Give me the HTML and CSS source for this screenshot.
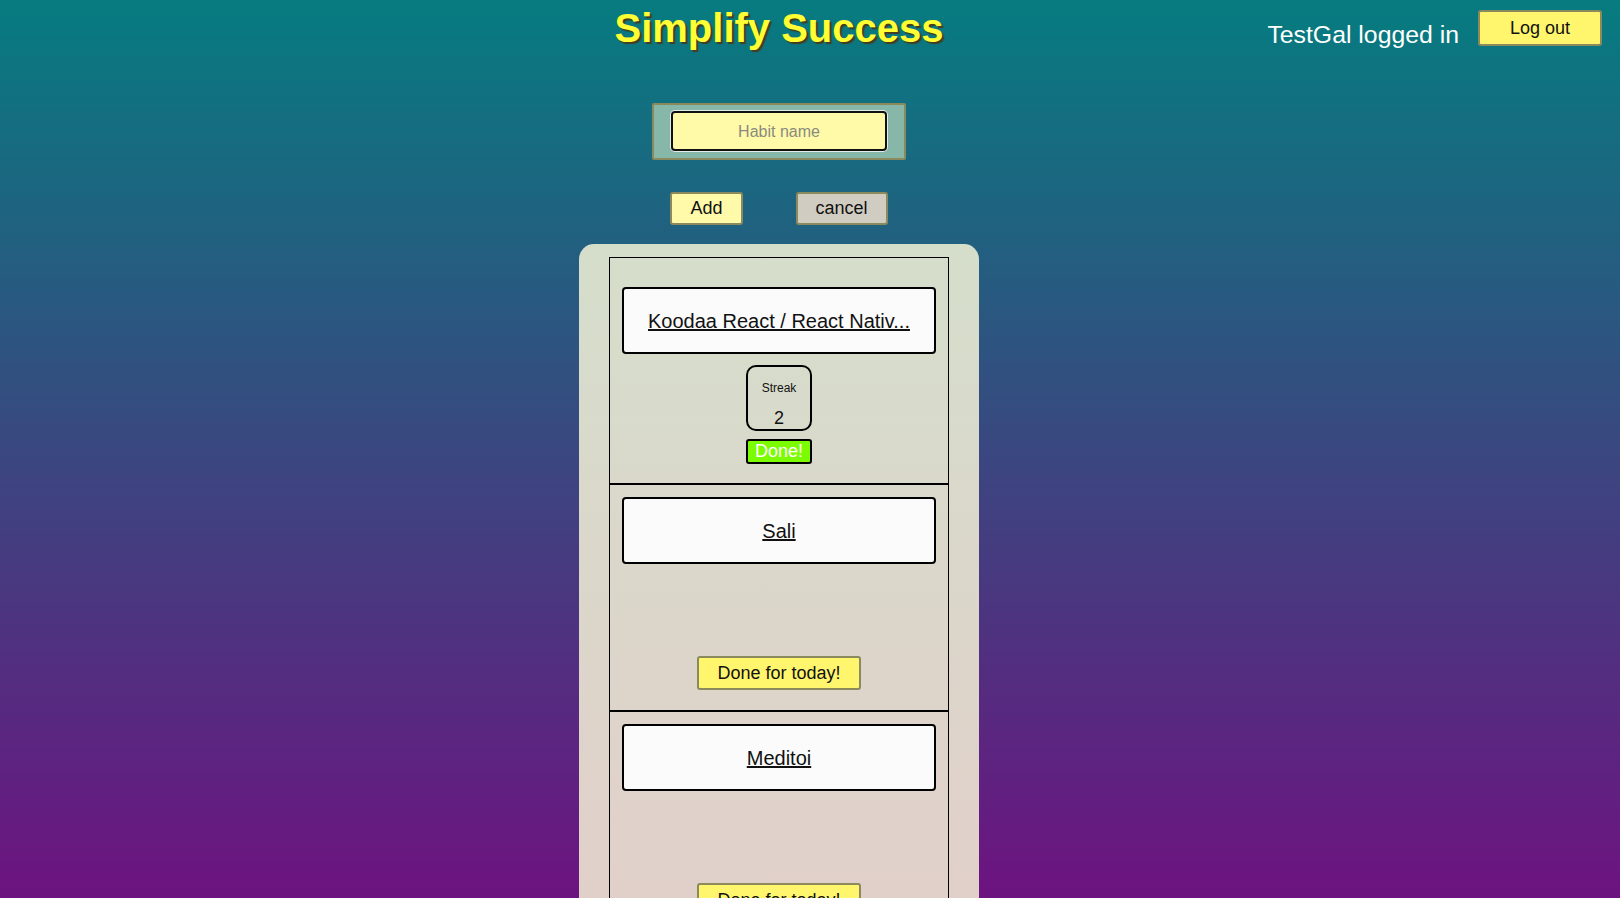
FILE: index.html
```html
<!DOCTYPE html>
<html lang="en">
<head>
<meta charset="utf-8">
<title>Simplify Success</title>
<link rel="stylesheet" href="styles.css">
</head>
<body>
  <header class="top">
    <h1 class="brand">Simplify Success</h1>
    <div class="user">
      <span class="user-name">TestGal logged in</span>
      <button class="btn btn-yellow btn-logout" type="button">Log out</button>
    </div>
  </header>
  <main class="main">
    <form class="new-habit">
      <input class="habit-input" type="text" placeholder="Habit name">
    </form>
    <div class="form-actions">
      <button class="btn btn-add" type="button">Add</button>
      <button class="btn btn-cancel" type="button">cancel</button>
    </div>
    <section class="card">
      <ul class="habit-list">
        <li class="habit habit-first">
          <div class="habit-title"><a href="#">Koodaa React / React Nativ...</a></div>
          <div class="streak">
            <span class="streak-label">Streak</span>
            <span class="streak-value">2</span>
          </div>
          <button class="btn-done" type="button">Done!</button>
        </li>
        <li class="habit">
          <div class="habit-title"><a href="#">Sali</a></div>
          <button class="btn btn-yellow btn-today" type="button">Done for today!</button>
        </li>
        <li class="habit">
          <div class="habit-title"><a href="#">Meditoi</a></div>
          <button class="btn btn-yellow btn-today" type="button">Done for today!</button>
        </li>
      </ul>
    </section>
  </main>
</body>
</html>
```

FILE: styles.css
```css
html {
  height: 100%;
  overflow: hidden;
}

body {
  margin: 0;
  min-height: 100%;
  font-family: "Liberation Sans", Arial, sans-serif;
  color: #111;
  background: linear-gradient(to bottom, #067c80 0px, #6d1380 898px);
}

.top {
  display: grid;
  grid-template-columns: 1fr;
}

.brand {
  grid-area: 1 / 1;
  justify-self: center;
  margin: 5px 62px 0 0;
  font-size: 40px;
  line-height: 46px;
  font-weight: bold;
  color: #ffff33;
  text-shadow: 2px 2px 1px rgba(90, 40, 0, 0.75);
}

.user {
  grid-area: 1 / 1;
  justify-self: end;
  align-self: start;
  display: flex;
  align-items: flex-start;
  gap: 19px;
  margin-right: 18px;
}

.user-name {
  margin-top: 21px;
  font-size: 24.8px;
  line-height: 28px;
  color: #fff;
}

.btn {
  font-family: "Liberation Sans", Arial, sans-serif;
  font-size: 18px;
  line-height: 21px;
  color: #111;
  border: 2px solid #8a8a5c;
  border-radius: 3px;
  padding: 0 18px;
  box-sizing: border-box;
  cursor: pointer;
}

.btn-yellow {
  background: #fff66e;
}

.btn-logout {
  margin-top: 10px;
  width: 124px;
  height: 36px;
  padding: 0;
}

.main {
  display: flex;
  flex-direction: column;
  align-items: center;
  padding-right: 62px;
}

.new-habit {
  margin: 52px 0 0;
  padding: 6px 17px 7px;
  background: #87b7a9;
  border: 2px solid #8a8a5c;
  border-radius: 2px;
}

.habit-input {
  display: block;
  width: 216px;
  height: 40px;
  box-sizing: border-box;
  border: 2px solid #111;
  border-radius: 4px;
  background: #fffaa8;
  box-shadow: 0 0 0 1px rgba(255, 255, 255, 0.75);
  font-family: "Liberation Sans", Arial, sans-serif;
  font-size: 16px;
  text-align: center;
  outline: none;
  padding-top: 2px;
}

.habit-input::placeholder {
  color: #8a8a80;
}

.form-actions {
  display: flex;
  gap: 53px;
  margin-top: 32px;
}

.form-actions .btn {
  height: 33px;
}

.btn-add {
  background: #fffaaa;
}

.btn-cancel {
  background: #d0ccc2;
}

.card {
  margin-top: 19px;
  width: 400px;
  box-sizing: border-box;
  padding: 13px 30px 0;
  border-radius: 15px 15px 0 0;
  background: linear-gradient(to bottom, #d5decb 0px, #e1d0ca 654px);
}

.habit-list {
  list-style: none;
  margin: 0;
  padding: 17px 12px 0;
  border: 1px solid #000;
  border-bottom: none;
}

.habit {
  display: flex;
  flex-direction: column;
  align-items: center;
  margin: 0 -12px;
  padding: 12px 12px 20px;
  border-bottom: 2px solid #000;
}

.habit-first {
  padding-bottom: 19px;
}

.habit-title {
  align-self: stretch;
  height: 67px;
  box-sizing: border-box;
  display: flex;
  align-items: center;
  justify-content: center;
  background: #fbfbfb;
  border: 2px solid #000;
  border-radius: 4px;
  padding-top: 1px;
}

.habit-title a {
  font-size: 20px;
  color: #111;
  text-decoration: underline;
}

.streak {
  margin-top: 11px;
  width: 66px;
  height: 66px;
  box-sizing: border-box;
  border: 2px solid #000;
  border-radius: 10px;
  display: flex;
  flex-direction: column;
  align-items: center;
  padding-top: 14px;
}

.streak-label {
  font-size: 12px;
  line-height: 14px;
}

.streak-value {
  margin-top: 13px;
  font-size: 18px;
  line-height: 21px;
}

.btn-done {
  margin-top: 8px;
  width: 66px;
  height: 25px;
  box-sizing: border-box;
  padding: 0;
  background: #7cfc00;
  border: 2px solid #000;
  border-radius: 3px;
  color: #fff;
  font-family: "Liberation Sans", Arial, sans-serif;
  font-size: 18px;
  line-height: 21px;
}

.btn-today {
  margin-top: 92px;
  height: 34px;
}
```
